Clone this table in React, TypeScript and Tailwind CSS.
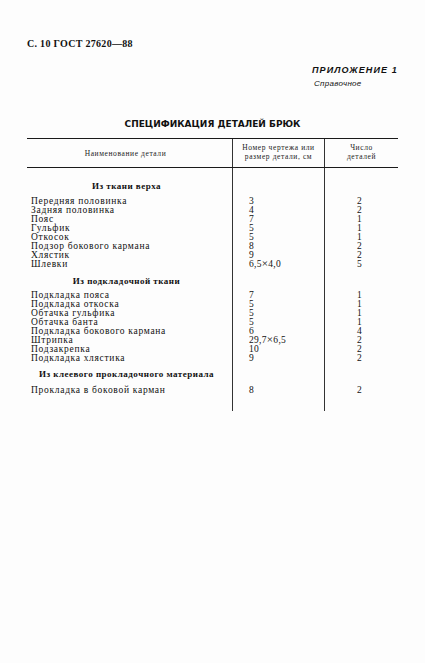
import React from 'react';

type Row = { name: string; num: string; qty: string };
type Section = { title: string; rows: Row[]; gapTop: string; gapRows: string };

const sections: Section[] = [
  {
    title: 'Из ткани верха',
    gapTop: 'mt-[13px]',
    gapRows: 'mt-[6px]',
    rows: [
      { name: 'Передняя половинка', num: '3', qty: '2' },
      { name: 'Задняя половинка', num: '4', qty: '2' },
      { name: 'Пояс', num: '7', qty: '1' },
      { name: 'Гульфик', num: '5', qty: '1' },
      { name: 'Откосок', num: '5', qty: '1' },
      { name: 'Подзор бокового кармана', num: '8', qty: '2' },
      { name: 'Хлястик', num: '9', qty: '2' },
      { name: 'Шлевки', num: '6,5×4,0', qty: '5' },
    ],
  },
  {
    title: 'Из подкладочной ткани',
    gapTop: 'mt-[7px]',
    gapRows: 'mt-[5px]',
    rows: [
      { name: 'Подкладка пояса', num: '7', qty: '1' },
      { name: 'Подкладка откоска', num: '5', qty: '1' },
      { name: 'Обтачка гульфика', num: '5', qty: '1' },
      { name: 'Обтачка банта', num: '5', qty: '1' },
      { name: 'Подкладка бокового кармана', num: '6', qty: '4' },
      { name: 'Штрипка', num: '29,7×6,5', qty: '2' },
      { name: 'Подзакрепка', num: '10', qty: '2' },
      { name: 'Подкладка хлястика', num: '9', qty: '2' },
    ],
  },
  {
    title: 'Из клеевого прокладочного материала',
    gapTop: 'mt-[6px]',
    gapRows: 'mt-[7px]',
    rows: [{ name: 'Прокладка в боковой карман', num: '8', qty: '2' }],
  },
];

const serif = "font-['Liberation_Serif','DejaVu_Serif',serif]";

// the "×" in sizes is set a bit larger, as in the scan
function Size({ value }: { value: string }) {
  const parts = value.split('×');
  if (parts.length < 2) return <>{value}</>;
  return (
    <>
      {parts[0]}
      <span className="text-[11px] leading-[0]">×</span>
      {parts[1]}
    </>
  );
}

export default function App() {
  return (
    <div className={`w-[425px] h-[663px] bg-[#fdfdfd] text-[#111] ${serif} pt-[38px] pl-[27px] overflow-hidden`}>
      {/* Page header */}
      <div className="text-[10px] leading-[12px] font-bold tracking-[0.3px]">С. 10 ГОСТ 27620—88</div>

      <div className="ml-[285px] mt-[14px] font-['Liberation_Sans',sans-serif] italic">
        <div className="text-[9px] leading-[12px] font-bold tracking-[1.1px]">ПРИЛОЖЕНИЕ 1</div>
        <div className="text-[8px] leading-[10px] ml-[2px] mt-[3px] tracking-[0.3px]">Справочное</div>
      </div>

      <div className="w-[371px] mt-[29px] text-center font-['DejaVu_Sans',sans-serif] font-bold text-[9px] leading-[12px]">
        СПЕЦИФИКАЦИЯ ДЕТАЛЕЙ БРЮК
      </div>

      {/* Table */}
      <div className="w-[371px] mt-[8px] border-t-[1.5px] border-[#1a1a1a]">
        <div className="grid grid-cols-[205px_92px_74px] h-[29px] border-b-[1.5px] border-[#1a1a1a] text-[7.5px] leading-[9px] tracking-[0.6px] text-[#222]">
          <div className="flex items-center justify-center pr-[8px]">Наименование детали</div>
          <div className="flex flex-col items-center justify-center border-l border-[#333] pb-[2px]">
            <span>Номер чертежа или</span>
            <span>размер детали, см</span>
          </div>
          <div className="flex flex-col items-center justify-center border-l border-[#333] pb-[2px]">
            <span>Число</span>
            <span>деталей</span>
          </div>
        </div>

        <div className="grid grid-cols-[205px_92px_74px] h-[243px]">
          <div className="flex flex-col">
            {sections.map((s) => (
              <div key={s.title}>
                <div className={`${s.gapTop} text-center font-bold text-[9px] leading-[10px] tracking-[0.5px] pr-[6px]`}>{s.title}</div>
                <div className={`${s.gapRows} pl-[4px] text-[9.5px] leading-[9px] tracking-[0.7px]`}>
                  {s.rows.map((r) => (
                    <div key={r.name} className="h-[9px]">{r.name}</div>
                  ))}
                </div>
              </div>
            ))}
          </div>
          <div className="flex flex-col border-l border-[#333]">
            {sections.map((s) => (
              <div key={s.title}>
                <div className={`${s.gapTop} h-[10px]`} />
                <div className={`${s.gapRows} pl-[16px] text-[9.5px] leading-[9px] tracking-[0.3px]`}>
                  {s.rows.map((r) => (
                    <div key={r.name} className="h-[9px]">
                      <Size value={r.num} />
                    </div>
                  ))}
                </div>
              </div>
            ))}
          </div>
          <div className="flex flex-col border-l border-[#333]">
            {sections.map((s) => (
              <div key={s.title}>
                <div className={`${s.gapTop} h-[10px]`} />
                <div className={`${s.gapRows} pl-[32px] text-[9.5px] leading-[9px]`}>
                  {s.rows.map((r) => (
                    <div key={r.name} className="h-[9px]">{r.qty}</div>
                  ))}
                </div>
              </div>
            ))}
          </div>
        </div>
      </div>
    </div>
  );
}
